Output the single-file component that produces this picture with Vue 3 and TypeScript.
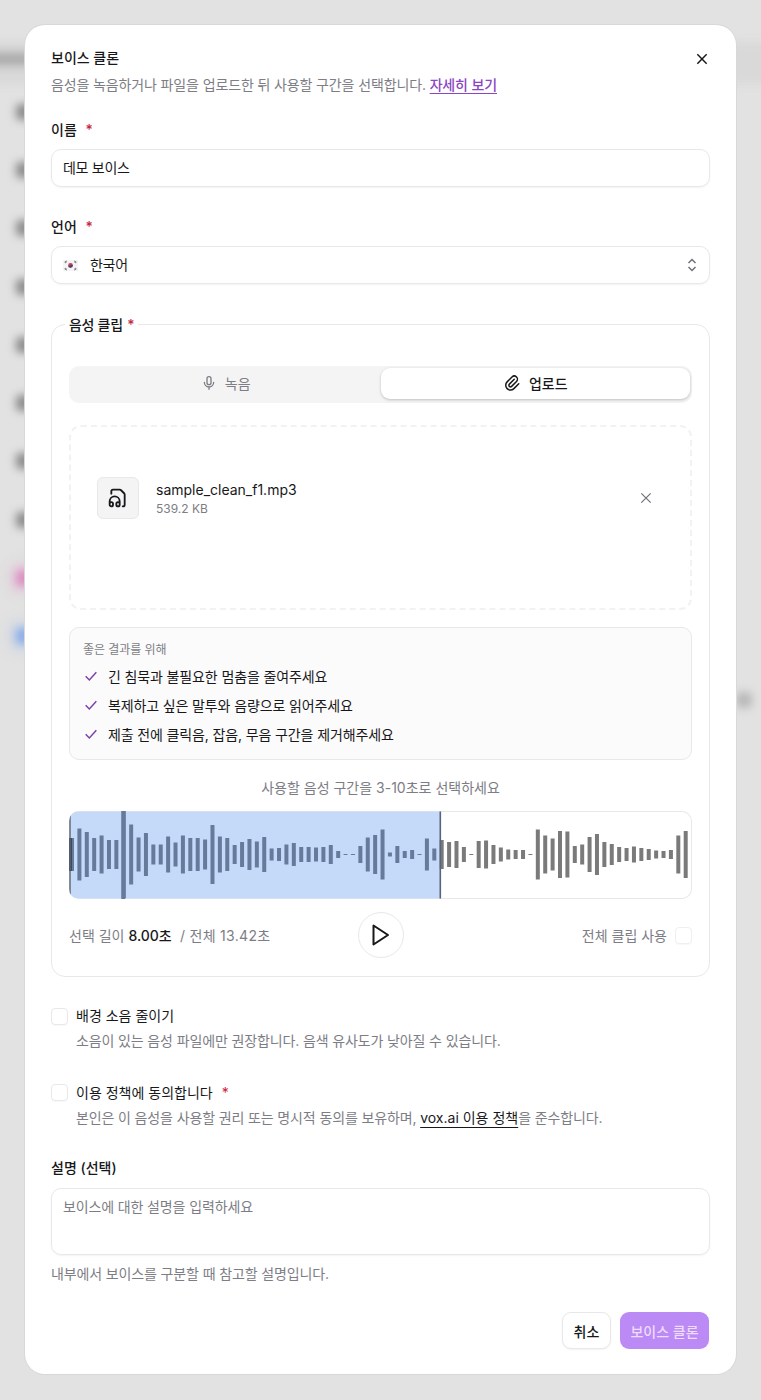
<script setup lang="ts">
const tips: string[] = [
  '긴 침묵과 불필요한 멈춤을 줄여주세요',
  '복제하고 싶은 말투와 음량으로 읽어주세요',
  '제출 전에 클릭음, 잡음, 무음 구간을 제거해주세요',
]
const heights: number[] = [
  33, 52, 45, 33, 38, 29, 29, 87, 60, 34, 43, 20, 20, 36, 24, 38, 33, 33, 30, 59, 36, 33, 19, 25, 31, 26, 35, 12, 13, 20, 23, 15, 15, 14, 15, 19, 7, 1, 1, 17, 34, 39,
  50, 4, 17, 7, 9, 1, 32, 12, 29, 25, 27, 15, 1, 27, 28, 19, 14, 10, 9, 9, 1, 50, 38, 32, 47, 46, 17, 20, 35, 41, 25, 21, 15, 13, 16, 13, 11, 8, 7, 9, 38, 47,
]
const SELECT_END = 370.5
const bars = heights.map((h, i) => {
  const x = 3 + i * 7.394
  return { x, h, y: 43.5 - h / 2, selected: x < SELECT_END }
})
const blobs = [112, 170, 228, 287, 345, 403, 461, 520]
</script>

<template>
  <div class="stage">
    <div class="backdrop" aria-hidden="true">
      <span class="strip strip-band"></span>
      <span class="strip strip-left"></span>
      <span class="strip strip-right"></span>
      <span v-for="y in blobs" :key="y" class="blob" :style="{ top: y - 8 + 'px' }"></span>
      <span class="blob pink"></span>
      <span class="blob blue"></span>
      <span class="blob side"></span>
    </div>

    <section class="modal">
      <header class="head">
        <div>
          <h1>보이스 클론</h1>
          <p class="sub">음성을 녹음하거나 파일을 업로드한 뒤 사용할 구간을 선택합니다. <a>자세히 보기</a></p>
        </div>
        <svg class="close" viewBox="0 0 24 24" width="16" height="16"><path d="M5 5l14 14M19 5L5 19" /></svg>
      </header>

      <label class="label first">이름 <i>*</i></label>
      <div class="field">데모 보이스</div>

      <label class="label second">언어 <i>*</i></label>
      <div class="field select">
        <svg class="flag" viewBox="0 0 15 11" width="15" height="11">
          <rect width="15" height="11" fill="#f4f4f4" />
          <circle cx="7.5" cy="5.5" r="2.4" fill="#c6404f" />
          <path d="M5.2 5.9a2.4 2.4 0 0 0 4.6-.6c-.6-.7-1.5-.5-2.2 0-.8.6-1.6.8-2.4.6z" fill="#2a4a8c" />
          <path d="M1.5 2.2l2-1.4M2 3l2-1.4M11.5.8l2 1.4M11 1.6l2 1.4M1.5 8.8l2 1.4M2 8l2 1.4M11.5 10.2l2-1.4M11 9.4l2-1.4" stroke="#333" stroke-width=".6" />
        </svg>
        <span>한국어</span>
        <svg class="updown" viewBox="0 0 12 16" width="12" height="16"><path d="M2.5 6L6 2.5 9.500 6M2.500 10L6 13.500 9.500 10" /></svg>
      </div>

      <div class="clip">
        <span class="legend">음성 클립 <i>*</i></span>

        <div class="tabs">
          <div class="tab">
            <svg viewBox="0 0 24 24" width="16" height="16"><rect x="9" y="2.5" width="6" height="12" rx="3" /><path d="M5 11a7 7 0 0 0 14 0M12 18v3.5" /></svg>
            녹음
          </div>
          <div class="tab active">
            <svg viewBox="0 0 24 24" width="18" height="18"><path d="M15 7l-6.500 6.500a1.500 1.500 0 0 0 3 3l6.500-6.500a3 3 0 0 0-6-6l-6.500 6.500a4.500 4.500 0 0 0 9 9l6.500-6.500" /></svg>
            업로드
          </div>
        </div>

        <div class="drop">
          <div class="file-icon">
            <svg viewBox="0 0 24 24" width="20" height="20"><path d="M4 6.835V4a2 2 0 0 1 2-2h8a2.400 2.400 0 0 1 1.706.706l3.588 3.588A2.400 2.400 0 0 1 20 8v12a2 2 0 0 1-2 2h-.343" /><path d="M2 19a2 2 0 0 1 4 0v1a2 2 0 0 1-4 0v-4a6 6 0 0 1 12 0v4a2 2 0 0 1-4 0v-1a2 2 0 0 1 4 0" /></svg>
          </div>
          <div class="file-meta">
            <div class="file-name">sample_clean_f1.mp3</div>
            <div class="file-size">539.2 KB</div>
          </div>
          <svg class="file-x" viewBox="0 0 24 24" width="16" height="16"><path d="M5 5l14 14M19 5L5 19" /></svg>
        </div>

        <div class="tips">
          <div class="tips-title">좋은 결과를 위해</div>
          <div v-for="tip in tips" :key="tip" class="tip">
            <svg viewBox="0 0 24 24" width="16" height="16"><path d="M4 12.500l5.500 5.500L20 6.500" /></svg>
            {{ tip }}
          </div>
        </div>

        <p class="prompt">사용할 음성 구간을 3-10초로 선택하세요</p>

        <div class="wave">
          <svg viewBox="0 0 623 88" width="623" height="88">
            <rect x="1" y="0.500" :width="SELECT_END" height="87" fill="#c5daf9" />
            <rect
              v-for="(b, i) in bars"
              :key="i"
              :x="b.x - 2"
              :y="b.y"
              width="4"
              :height="b.h"
              :fill="b.selected ? '#667b9c' : '#7a7a7a'"
            />
            <rect x="0" y="27" width="3" height="33" fill="#3f4a5c" />
            <rect x="0.300" y="1" width="1.400" height="86" fill="#5a6475" />
            <rect x="52.300" y="0" width="4" height="88" fill="#667b9c" />
            <rect :x="SELECT_END" y="0.500" width="1.600" height="87" fill="#56657e" />
          </svg>
        </div>

        <div class="controls">
          <div class="duration">선택 길이 <b>8.00초</b> <span>&nbsp;/ 전체 13.42초</span></div>
          <button class="play" type="button" aria-label="재생">
            <svg viewBox="0 0 24 24" width="24" height="24"><path d="M4.500 2.500v19L19 12z" /></svg>
          </button>
          <div class="whole">전체 클립 사용 <span class="check small"></span></div>
        </div>
      </div>

      <div class="option first-option">
        <span class="check nudged"></span>
        <div>
          <div class="opt-label">배경 소음 줄이기</div>
          <div class="opt-desc">소음이 있는 음성 파일에만 권장합니다. 음색 유사도가 낮아질 수 있습니다.</div>
        </div>
      </div>
      <div class="option second-option">
        <span class="check"></span>
        <div>
          <div class="opt-label">이용 정책에 동의합니다 <i>*</i></div>
          <div class="opt-desc">본인은 이 음성을 사용할 권리 또는 명시적 동의를 보유하며, <u>vox.ai 이용 정책</u>을 준수합니다.</div>
        </div>
      </div>

      <label class="label third">설명 (선택)</label>
      <div class="area">보이스에 대한 설명을 입력하세요</div>
      <p class="hint">내부에서 보이스를 구분할 때 참고할 설명입니다.</p>

      <footer class="foot">
        <button class="btn ghost" type="button">취소</button>
        <button class="btn primary" type="button">보이스 클론</button>
      </footer>
    </section>
  </div>
</template>

<style>
html,
body {
  margin: 0;
  background: #e2e2e2;
}
</style>

<style scoped>
.stage {
  position: relative;
  width: 761px;
  height: 1400px;
  overflow: hidden;
  background: #e2e2e2;
  padding: 25px;
  box-sizing: border-box;
  font-family: Inter, "Noto Sans CJK KR", sans-serif;
  color: #18181b;
  font-size: 14px;
}
.backdrop {
  position: absolute;
  inset: 0;
}
.strip {
  position: absolute;
  top: 42px;
  height: 42px;
  filter: blur(5px);
}
.strip-band {
  left: -10px;
  width: 50px;
  background: #d8d8d8;
}
.strip-left {
  left: -10px;
  width: 50px;
  top: 53px;
  height: 12px;
  background: #a8a8a8;
}
.strip-right {
  right: -10px;
  width: 50px;
  background: #d9d9d9;
}
.blob {
  position: absolute;
  left: 16px;
  width: 16px;
  height: 16px;
  border-radius: 4px;
  background: #8c8c8c;
  filter: blur(4px);
}
.blob.pink {
  top: 570px;
  background: #dc8fc0;
  box-shadow: 0 0 8px 7px rgba(226, 185, 212, 0.5);
}
.blob.blue {
  top: 628px;
  background: #8aade8;
  box-shadow: 0 0 8px 7px rgba(185, 202, 232, 0.5);
}
.blob.side {
  left: 736px;
  top: 692px;
  background: #b9b9b9;
}
.modal {
  position: relative;
  width: 711px;
  height: 1349px;
  box-sizing: border-box;
  padding: 24px 26px 0;
  background: #fff;
  border-radius: 20px;
  box-shadow: 0 0 0 1px #d8d8d8;
}
.head {
  display: flex;
  justify-content: space-between;
  align-items: flex-start;
}
h1 {
  margin: 0;
  font-size: 14px;
  line-height: 18px;
  font-weight: 500;
}
.sub {
  margin: 9px 0 0;
  line-height: 18px;
  color: #7d7d85;
  white-space: nowrap;
  letter-spacing: -0.13px;
}
.sub a {
  color: #8b45c4;
  font-weight: 500;
  text-decoration: underline;
  text-underline-offset: 3px;
}
.close {
  margin-top: 2px;
  fill: none;
  stroke: #18181b;
  stroke-width: 2.2;
}
.label {
  display: block;
  font-weight: 500;
  line-height: 18px;
  margin-bottom: 10px;
}
.label i,
.legend i,
.opt-label i {
  font-style: normal;
  color: #c8243f;
  margin-left: 5px;
}
.label.first {
  margin-top: 27px;
}
.label.second {
  margin-top: 31px;
}
.label.third {
  margin-top: 32px;
  margin-bottom: 11px;
}
.field {
  height: 38px;
  box-sizing: border-box;
  padding: 0 11px 3px;
  display: flex;
  align-items: center;
  border: 1px solid #e8e8ea;
  border-radius: 10px;
  box-shadow: 0 1px 2px rgba(0, 0, 0, 0.05);
  letter-spacing: -0.3px;
}
.flag {
  margin-right: 12px;
  margin-top: 3px;
}
.updown {
  margin-left: auto;
  margin-top: 3px;
  fill: none;
  stroke: #707078;
  stroke-width: 1.5;
}
.clip {
  position: relative;
  margin-top: 40px;
  height: 653px;
  box-sizing: border-box;
  padding: 41px 17px 0;
  border: 1px solid #e8e8ea;
  border-radius: 14px;
}
.legend {
  position: absolute;
  left: 13px;
  top: -9px;
  padding: 0 4px;
  background: #fff;
  font-weight: 500;
  line-height: 18px;
  letter-spacing: -0.3px;
}
.legend i {
  margin-left: 1px;
}
.tabs {
  display: flex;
  height: 37px;
  box-sizing: border-box;
  padding: 2px 2px 4px;
  background: #f4f4f5;
  border-radius: 10px;
}
.tab {
  flex: 1;
  display: flex;
  align-items: center;
  justify-content: center;
  gap: 8px;
  padding-bottom: 1px;
  color: #7d7d85;
  border-radius: 9px;
}
.tab svg {
  fill: none;
  stroke: currentColor;
  stroke-width: 2;
  stroke-linecap: round;
  stroke-linejoin: round;
}
.tab.active {
  background: #fff;
  color: #18181b;
  font-weight: 500;
  box-shadow: 0 1px 3px rgba(0, 0, 0, 0.22);
}
.drop {
  margin-top: 22px;
  height: 185px;
  box-sizing: border-box;
  padding: 0 36px 0 26px;
  display: flex;
  align-items: flex-start;
  border: 2px dashed #f2f2f4;
  border-radius: 12px;
}
.file-icon {
  margin-top: 50px;
  width: 42px;
  height: 42px;
  box-sizing: border-box;
  display: flex;
  align-items: center;
  justify-content: center;
  background: #f4f4f5;
  border: 1px solid #e8e8ea;
  border-radius: 6px;
}
.file-icon svg {
  fill: none;
  stroke: #18181b;
  stroke-width: 2.2;
  stroke-linecap: round;
  stroke-linejoin: round;
}
.file-meta {
  margin: 54px 0 0 17px;
}
.file-name {
  line-height: 18px;
}
.file-size {
  font-size: 12px;
  line-height: 20px;
  color: #7d7d85;
}
.file-x {
  margin: 63px 0 0 auto;
  fill: none;
  stroke: #707078;
  stroke-width: 1.8;
}
.tips {
  margin-top: 17px;
  height: 133px;
  box-sizing: border-box;
  padding: 13px 13px 0;
  background: #fbfbfb;
  border: 1px solid #e8e8ea;
  border-radius: 10px;
}
.tips-title {
  font-size: 12px;
  line-height: 18px;
  color: #7d7d85;
  letter-spacing: -0.05px;
}
.tip {
  display: flex;
  align-items: center;
  gap: 9px;
  height: 29px;
  letter-spacing: -0.13px;
}
.tips-title + .tip {
  margin-top: 2px;
}
.tip svg {
  fill: none;
  stroke: #7b3fa8;
  stroke-width: 2.2;
}
.prompt {
  margin: 19px 0 0;
  text-align: center;
  line-height: 18px;
  color: #7d7d85;
}
.wave {
  margin: 14px 0 0;
  height: 88px;
  box-sizing: border-box;
  border-radius: 10px;
  overflow: hidden;
  box-shadow: inset 0 0 0 1px #e8e8ea;
}
.wave svg {
  display: block;
}
.controls {
  margin: 13px 0 0;
  height: 46px;
  display: grid;
  grid-template-columns: 1fr 46px 1fr;
  column-gap: 86px;
  align-items: center;
}
.duration {
  color: #7d7d85;
  white-space: nowrap;
  margin-top: -1px;
}
.duration b {
  color: #18181b;
  font-weight: 500;
}
.duration span {
  letter-spacing: 0.3px;
}
.play {
  width: 46px;
  height: 46px;
  margin: 0;
  padding: 0;
  display: flex;
  align-items: center;
  justify-content: center;
  background: #fff;
  border: 1px solid #e8e8ea;
  border-radius: 50%;
}
.play svg {
  fill: none;
  stroke: #18181b;
  stroke-width: 2;
  stroke-linejoin: round;
}
.whole {
  display: flex;
  align-items: center;
  justify-content: flex-end;
  gap: 8px;
  color: #7d7d85;
  white-space: nowrap;
}
.check {
  display: block;
  flex: none;
  width: 17px;
  height: 17px;
  box-sizing: border-box;
  border: 1px solid #e8e8ea;
  border-radius: 4px;
  box-shadow: 0 1px 1px rgba(0, 0, 0, 0.03);
}
.check.nudged {
  margin-top: 1px;
}
.check.small {
  border-color: #efeff1;
}
.option {
  display: flex;
  gap: 8px;
}
.first-option {
  margin-top: 30px;
}
.second-option {
  margin-top: 34px;
}
.opt-label {
  line-height: 18px;
  font-weight: 400;
}
.opt-desc {
  margin-top: 7px;
  line-height: 18px;
  color: #7d7d85;
  white-space: nowrap;
  letter-spacing: -0.13px;
}
.opt-desc u {
  color: #18181b;
  letter-spacing: 0;
  text-decoration-thickness: 1px;
  text-underline-offset: 4px;
}
.area {
  height: 67px;
  box-sizing: border-box;
  padding: 9px 11px;
  line-height: 18px;
  color: #7d7d85;
  border: 1px solid #e8e8ea;
  border-radius: 10px;
  box-shadow: 0 1px 2px rgba(0, 0, 0, 0.05);
  letter-spacing: -0.13px;
}
.hint {
  margin: 10px 0 0;
  font-size: 14px;
  line-height: 18px;
  color: #7d7d85;
  letter-spacing: -0.13px;
}
.foot {
  margin-top: 29px;
  margin-right: 1px;
  display: flex;
  justify-content: flex-end;
  gap: 9px;
}
.btn {
  height: 37px;
  border-radius: 9px;
  font: 500 14px Inter, "Noto Sans CJK KR", sans-serif;
}
.ghost {
  width: 49px;
  padding: 0;
  background: #fff;
  color: #18181b;
  border: 1px solid #e8e8ea;
  box-shadow: 0 1px 2px rgba(0, 0, 0, 0.05);
}
.primary {
  width: 89px;
  padding: 0;
  background: #bb8af5;
  color: #eedcff;
  border: 0;
}
</style>
